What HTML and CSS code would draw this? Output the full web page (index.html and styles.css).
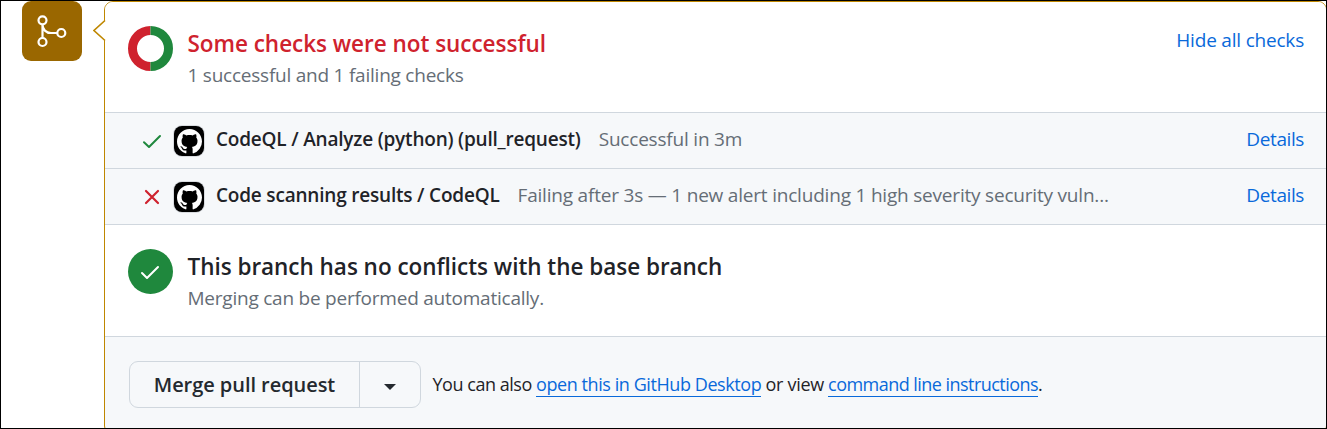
FILE: index.html
```
<!DOCTYPE html>
<html lang="en">
<head>
<meta charset="utf-8">
<title>Merge status</title>
<link rel="stylesheet" href="styles.css">
</head>
<body>
<div class="frame">
  <div class="badge">
    <svg class="badge-icon" width="60" height="60" viewBox="0 0 60 60" fill="none" stroke="#fff" stroke-width="2.200"><circle cx="20.500" cy="19.300" r="4"/><circle cx="20.500" cy="41" r="4"/><circle cx="39.300" cy="32" r="4"/><path d="M20.500 23.500V37M20.500 23.500C20.500 28.500 24 32 29 32H35.300"/></svg>
  </div>
  <main class="card">
    <svg class="caret" width="13" height="22" viewBox="0 0 13 22"><path d="M12 0.500L1 10.500L12 20.500" fill="#fff" stroke="#bf8700" stroke-width="1.600"/></svg>
    <section class="summary">
      <svg class="status" width="45" height="45" viewBox="0 0 45 45" fill="none" stroke-width="9"><path d="M22.500 4.500A18 18 0 0 0 22.500 40.500" stroke="#cf222e"/><path d="M22.500 4.500A18 18 0 0 1 22.500 40.500" stroke="#1f883d"/></svg>
      <div class="copy">
        <h2 class="title failed">Some checks were not successful</h2>
        <p class="sub">1 successful and 1 failing checks</p>
      </div>
      <a class="link toggle">Hide all checks</a>
    </section>
    <section class="check">
      <svg class="mark" width="20" height="20" viewBox="0 0 20 20" fill="none" stroke="#1f883d" stroke-width="2" stroke-linecap="round" stroke-linejoin="round"><path d="M2 11.300L7 16L18 5"/></svg>
      <span class="avatar"><svg width="25" height="25" viewBox="0 0 16 16" fill="#fff"><path d="M8 0C3.580 0 0 3.580 0 8c0 3.540 2.290 6.530 5.470 7.590.4.070.55-.17.55-.38 0-.19-.01-.82-.01-1.490-2.010.37-2.530-.49-2.690-.94-.09-.23-.48-.94-.82-1.130-.28-.15-.68-.52-.01-.53.63-.01 1.080.58 1.230.82.72 1.210 1.870.87 2.330.66.07-.52.28-.87.51-1.070-1.780-.2-3.640-.89-3.640-3.950 0-.87.31-1.590.82-2.150-.08-.2-.36-1.020.08-2.120 0 0 .67-.21 2.200.82.64-.18 1.320-.27 2-.27s1.360.09 2 .27c1.530-1.040 2.200-.82 2.200-.82.44 1.100.16 1.920.08 2.120.51.56.82 1.270.82 2.150 0 3.070-1.870 3.750-3.650 3.950.29.25.54.73.54 1.480 0 1.070-.01 1.930-.01 2.200 0 .21.15.46.55.38A8.010 8.010 0 0 0 16 8c0-4.420-3.580-8-8-8z"/></svg></span>
      <strong class="name">CodeQL / Analyze (python) (pull_request)</strong>
      <span class="detail">Successful in 3m</span>
      <a class="link details">Details</a>
    </section>
    <section class="check">
      <svg class="mark cross" width="20" height="20" viewBox="0 0 20 20" fill="none" stroke="#cf222e" stroke-width="2.200" stroke-linecap="round"><path d="M4 4L16 16M16 4L4 16"/></svg>
      <span class="avatar"><svg width="25" height="25" viewBox="0 0 16 16" fill="#fff"><path d="M8 0C3.580 0 0 3.580 0 8c0 3.540 2.290 6.530 5.470 7.590.4.070.55-.17.55-.38 0-.19-.01-.82-.01-1.490-2.010.37-2.530-.49-2.690-.94-.09-.23-.48-.94-.82-1.130-.28-.15-.68-.52-.01-.53.63-.01 1.080.58 1.230.82.72 1.210 1.870.87 2.330.66.07-.52.28-.87.51-1.070-1.780-.2-3.640-.89-3.640-3.950 0-.87.31-1.590.82-2.150-.08-.2-.36-1.020.08-2.120 0 0 .67-.21 2.200.82.64-.18 1.320-.27 2-.27s1.360.09 2 .27c1.530-1.040 2.200-.82 2.200-.82.44 1.100.16 1.920.08 2.120.51.56.82 1.270.82 2.150 0 3.070-1.870 3.750-3.650 3.950.29.25.54.73.54 1.480 0 1.070-.01 1.930-.01 2.200 0 .21.15.46.55.38A8.010 8.010 0 0 0 16 8c0-4.420-3.580-8-8-8z"/></svg></span>
      <strong class="name">Code scanning results / CodeQL</strong>
      <span class="detail">Failing after 3s — 1 new alert including 1 high severity security vuln...</span>
      <a class="link details">Details</a>
    </section>
    <section class="summary conflicts">
      <svg class="status" width="45" height="45" viewBox="0 0 45 45"><circle cx="22.500" cy="22.500" r="22.500" fill="#1f883d"/><path d="M14 24L19 29L30 18" fill="none" stroke="#fff" stroke-width="2" stroke-linecap="round" stroke-linejoin="round"/></svg>
      <div class="copy">
        <h2 class="title">This branch has no conflicts with the base branch</h2>
        <p class="sub">Merging can be performed automatically.</p>
      </div>
    </section>
    <footer class="actions">
      <div class="buttons">
        <button class="merge">Merge pull request</button>
        <button class="menu" aria-label="Select merge method"><svg width="12" height="6" viewBox="0 0 12 6"><path d="M0 0H12L6 6Z" fill="#24292f"/></svg></button>
      </div>
      <p class="hint">You can also <a class="u desktop">open this in GitHub Desktop</a> <span class="or">or view</span> <a class="u cli">command line instructions</a>.</p>
    </footer>
  </main>
</div>
</body>
</html>
```
FILE: styles.css
```
* { box-sizing: border-box; }
body { margin: 0; background: #fff; font-family: "Open Sans", "Noto Sans", sans-serif; color: #1f2328; }
h2, p { margin: 0; }
svg { display: block; flex: none; }
.frame { width: 1327px; height: 429px; border: 1px solid #000; display: flex; padding-left: 21px; overflow: hidden; }
.badge { width: 60px; height: 60px; flex: none; border-radius: 9px; background: #9a6700; margin-right: 22px; }
.card { position: relative; width: 1223px; height: 434px; flex: none; border: 1px solid #bf8700; border-radius: 9px; background: #f6f8fa; }
.caret { position: absolute; left: -12px; top: 18px; }
.summary { height: 110px; background: #fff; border-radius: 8px 8px 0 0; display: flex; padding: 24px 22px 0 23px; }
.conflicts { height: 112px; border-top: 1px solid #d0d7de; border-radius: 0; }
.copy { margin-left: 14.500px; flex: 1; white-space: nowrap; }
.title { font-size: 22.500px; line-height: 36px; font-weight: 550; letter-spacing: -0.030px; }
.failed { color: #cf222e; }
.sub { font-size: 19px; line-height: 26px; color: #656d76; letter-spacing: -0.230px; }
.link { color: #0969da; font-size: 19px; line-height: 28px; letter-spacing: -0.400px; white-space: nowrap; }
.toggle { letter-spacing: -0.200px; }
.check { height: 56px; border-top: 1px solid #d0d7de; display: flex; align-items: center; padding: 0 22px 3px 37px; white-space: nowrap; }
.mark { margin-right: 12px; position: relative; top: 2px; }
.avatar { width: 30px; height: 30px; border-radius: 8px; background: #000; box-shadow: 0 0 0 1px #d8dbdf; padding: 3px 2.500px; margin: 3px 12px 0 0; }
.name { font-size: 19px; font-weight: 550; letter-spacing: -0.200px; }
.detail { font-size: 19px; color: #656d76; letter-spacing: -0.200px; margin-left: 18px; }
.details { margin-left: auto; }
.actions { border-top: 1px solid #d0d7de; padding: 24px 0 0 24px; display: flex; }
.buttons { width: 292px; height: 47px; display: flex; border: 1px solid #d0d7de; border-radius: 9px; }
button { font: inherit; color: #24292f; background: none; border: 0; padding: 0; }
.merge { width: 230px; border-right: 1px solid #d0d7de; font-size: 20px; font-weight: 550; letter-spacing: -0.050px; }
.menu { flex: 1; display: flex; align-items: center; justify-content: center; padding-top: 4px; }
.hint { margin-left: 11.500px; font-size: 18px; line-height: 24px; padding-top: 11px; letter-spacing: -0.470px; white-space: nowrap; }
.u { color: #0969da; display: inline-block; border-bottom: 1px solid #0969da; line-height: 23px; }
.desktop { letter-spacing: -0.420px; }
.or { letter-spacing: -0.300px; }
.cli { letter-spacing: -0.540px; }
```
